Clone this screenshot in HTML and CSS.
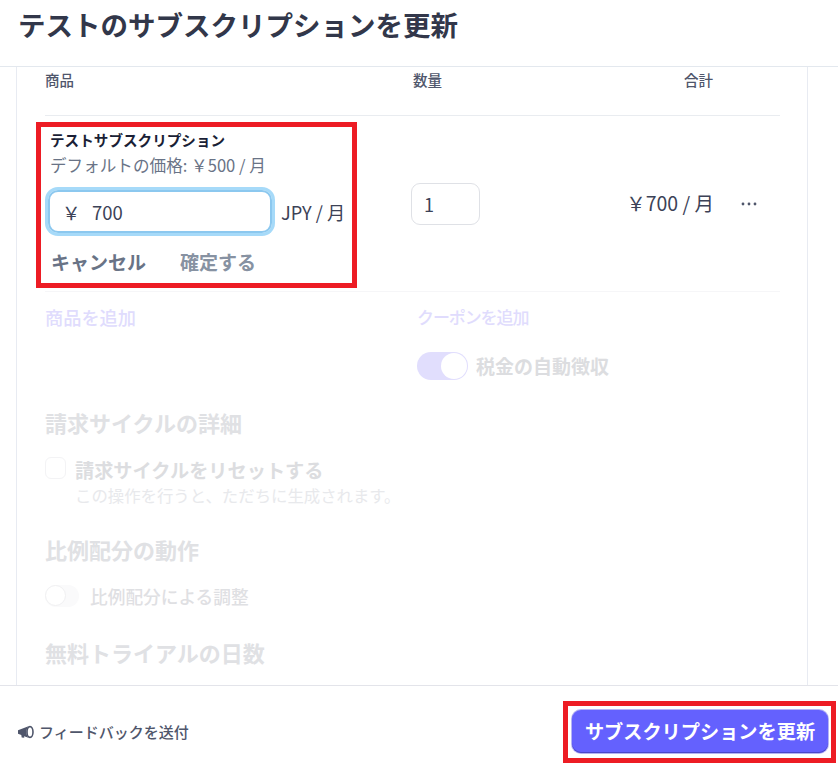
FILE: index.html
```html
<!DOCTYPE html>
<html lang="ja">
<head>
<meta charset="utf-8">
<title>テストのサブスクリプションを更新</title>
<link rel="stylesheet" href="styles.css">
</head>
<body>
<div class="app">
  <header class="top"><h1>テストのサブスクリプションを更新</h1></header>
  <main class="main">
    <div class="panel">
      <div class="grid head">
        <div>商品</div><div>数量</div><div class="total-h">合計</div>
      </div>
      <div class="grid row">
        <div class="product">
          <div class="annot annot-product"></div>
          <div class="pname">テストサブスクリプション</div>
          <div class="pdefault">デフォルトの価格: ￥500 / 月</div>
          <div class="price-line">
            <div class="price-input"><span class="yen">￥</span><span>700</span></div>
            <span class="unit">JPY / 月</span>
          </div>
          <div class="actions"><span class="cancel">キャンセル</span><span class="confirm">確定する</span></div>
        </div>
        <div class="qty-cell"><div class="qty">1</div></div>
        <div class="sum">￥700 / 月</div>
        <div class="more"><svg width="16" height="4" viewBox="0 0 16 4"><circle cx="2" cy="2" r="1.4"/><circle cx="8" cy="2" r="1.4"/><circle cx="14" cy="2" r="1.4"/></svg></div>
      </div>
      <div class="faded">
        <div class="links"><span class="link">商品を追加</span><span class="link coupon">クーポンを追加</span></div>
        <div class="tax">
          <span class="toggle on"><i></i></span><span class="tax-label">税金の自動徴収</span>
        </div>
        <h2 class="h-cycle">請求サイクルの詳細</h2>
        <div class="check-row">
          <span class="check"></span>
          <div><div class="check-label">請求サイクルをリセットする</div><div class="check-sub">この操作を行うと、ただちに生成されます。</div></div>
        </div>
        <h2 class="h-pro">比例配分の動作</h2>
        <div class="pro-row"><span class="toggle off"><i></i></span><span class="pro-label">比例配分による調整</span></div>
        <h2 class="h-trial">無料トライアルの日数</h2>
      </div>
    </div>
  </main>
  <footer class="foot">
    <div class="feedback">
      <svg width="17" height="14" viewBox="0 0 17 14"><path d="M1 5.2 11.5 1.2C10 3 9.4 5 9.4 7s.6 4 2.1 5.8L7 11.2l.3 1.6-2.6-.2-.4-2.6L1 8.8z" fill="#4f566b"/><ellipse cx="13" cy="7" rx="3" ry="5.4" fill="none" stroke="#4f566b" stroke-width="1.6"/></svg>
      <span>フィードバックを送付</span>
    </div>
    <div class="btn-wrap">
      <div class="annot annot-btn"></div>
      <div class="btn">サブスクリプションを更新</div>
    </div>
  </footer>
</div>
</body>
</html>
```

FILE: styles.css
```css
* { box-sizing: border-box; }
html, body { margin: 0; padding: 0; background: #fff; }
body { font-family: "Noto Sans CJK JP", "Noto Sans", sans-serif; color: #3c4257; }
.app { width: 838px; height: 771px; display: flex; flex-direction: column; overflow: hidden; }

.top { height: 67px; border-bottom: 1px solid #e3e8ee; padding: 6px 0 0 18px; flex: none; }
.top h1 { margin: 0; font-size: 27.5px; line-height: 36px; font-weight: 700; color: #32374a; }

.main { flex: 1; min-height: 0; overflow: hidden; padding-left: 16px; }
.panel { width: 792px; height: 100%; border-left: 1px solid #e8ebf2; border-right: 1px solid #e8ebf2; padding-left: 28px; overflow: hidden; }

.grid { width: 735px; display: grid; grid-template-columns: 368px 1fr 122px 58px; }
.head { height: 49px; border-bottom: 1px solid #e9ecf0; font-size: 14.5px; line-height: 25px; font-weight: 500; color: #4f566b; }
.head { grid-template-columns: 368px 271px 1fr; }
.total-h { text-align: left; }

.row { height: 176px; border-bottom: 1px solid #f6f6f8; align-items: center; }
.product { position: relative; height: 176px; padding: 14px 0 0 5px; }
.annot { position: absolute; border: 5px solid #ed1c24; pointer-events: none; }
.annot-product { left: -9px; top: 6px; width: 321px; height: 166px; }
.pname { font-size: 14.6px; line-height: 20px; font-weight: 700; color: #1a1f36; }
.pdefault { font-size: 16.6px; line-height: 20px; margin-top: 5px; color: #697386; white-space: nowrap; }
.price-line { display: flex; align-items: center; margin-top: 15px; margin-left: -2px; }
.price-input { width: 224px; height: 43px; border-radius: 10px; border: 2px solid #8cc8ef; box-shadow: 0 0 0 3px #a6daf9; display: flex; align-items: center; padding-left: 12px; font-size: 18.5px; color: #3c4257; }
.yen { width: 30px; }
.unit { margin-left: 9px; font-size: 18.2px; color: #3c4257; white-space: nowrap; }
.actions { margin-top: 15px; margin-left: 1px; font-size: 19px; line-height: 28px; font-weight: 700; display: flex; gap: 34px; }
.cancel { color: #697386; }
.confirm { color: #8792a2; }

.qty-cell { margin-left: -2px; }
.qty { width: 69px; height: 42px; border: 1px solid #dfe1e6; border-radius: 9px; font-size: 18px; line-height: 40px; padding-left: 12px; }
.sum { font-size: 19.5px; text-align: right; white-space: nowrap; padding-right: 8px; margin-left: -24px; margin-top: -4px; }
.more { fill: #4f566b; padding-left: 19px; line-height: 0; margin-top: -3px; }

.faded { width: 735px; }
.links { display: flex; height: 52px; padding-top: 13px; font-size: 18.2px; line-height: 24px; font-weight: 500; color: #e0dcfd; }
.link:first-child { width: 372px; }
.coupon { font-size: 17px; letter-spacing: -1.1px; }
.tax { margin-left: 372px; height: 30px; display: flex; align-items: center; gap: 8px; margin-top: 7px; }
.toggle { display: block; position: relative; border-radius: 14px; flex: none; }
.toggle i { position: absolute; display: block; border-radius: 50%; background: #fff; }
.toggle.on { width: 51px; height: 28px; background: #e1defd; }
.toggle.on i { right: 1px; top: 1px; width: 26px; height: 26px; }
.tax-label { font-size: 19px; line-height: 28px; font-weight: 700; color: #dcdde0; }
h2 { margin: 0; font-size: 22px; line-height: 30px; font-weight: 700; color: #e0e1e4; }
.h-cycle { margin-top: 26px; }
.check-row { display: flex; gap: 9px; margin-top: 20px; }
.check { width: 21px; height: 22px; flex: none; border: 1px solid #f3f3f5; border-radius: 6px; }
.check-label { font-size: 19.2px; line-height: 26px; font-weight: 700; color: #dcdde0; }
.check-sub { font-size: 16.4px; line-height: 24px; color: #e8e9ec; white-space: nowrap; }
.h-pro { margin-top: 27px; }
.pro-row { display: flex; align-items: center; gap: 11px; margin-top: 17px; height: 30px; }
.toggle.off { width: 34px; height: 22px; background: #fafafb; }
.toggle.off i { left: 0; top: 0; width: 21px; height: 21px; border: 1px solid #f0f0f2; }
.pro-label { font-size: 17.7px; line-height: 28px; font-weight: 500; color: #dfe0e3; }
.h-trial { margin-top: 26px; }

.foot { height: 86px; flex: none; border-top: 1px solid #e3e4ea; display: flex; align-items: center; justify-content: space-between; padding: 6px 10px 0 17px; }
.feedback { display: flex; align-items: center; gap: 5px; font-size: 15px; font-weight: 500; color: #4f566b; }
.btn-wrap { position: relative; }
.annot-btn { left: -9px; top: -9px; width: 273px; height: 62px; }
.btn { width: 256px; height: 43px; border-radius: 9px; background: #6461fe; box-shadow: inset 0 -1px 0 #4a47c9, 0 0 0 1px #b5b3f5; font-size: 19.2px; line-height: 43px; font-weight: 700; color: #fff; text-align: center; white-space: nowrap; }
```
